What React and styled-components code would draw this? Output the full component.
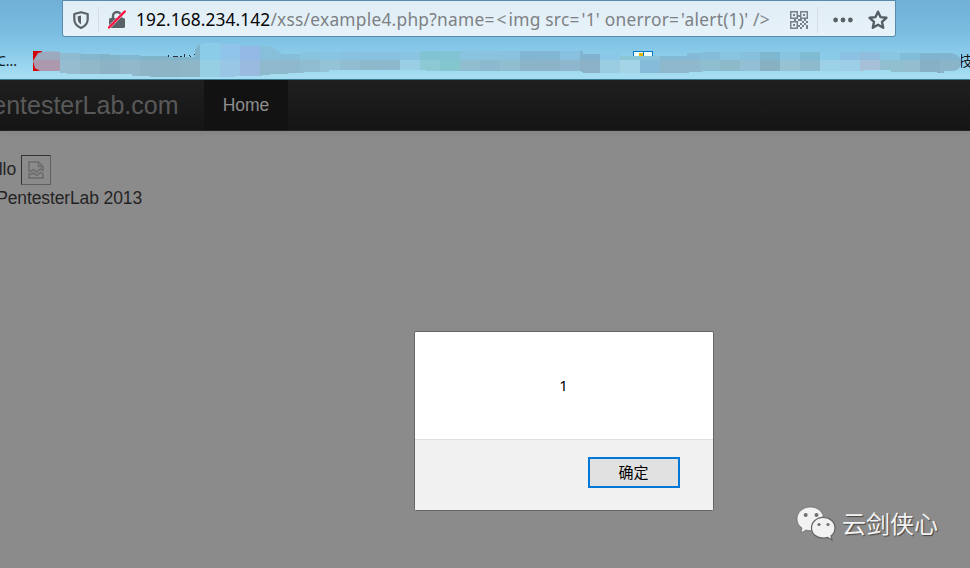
import React from 'react';
import styled, { createGlobalStyle } from 'styled-components';

const GlobalStyle = createGlobalStyle`
  * { box-sizing: border-box; }
  body { margin: 0; overflow: hidden; }
`;

const Browser = styled.div`
  position: relative;
  width: 970px;
  height: 568px;
  display: flex;
  flex-direction: column;
  overflow: hidden;
  background: #8b8b8b;
  font-family: 'Liberation Sans', Arial, sans-serif;
`;

const Chrome = styled.header`
  height: 80px;
  flex: none;
  display: flex;
  flex-direction: column;
  background: linear-gradient(#70b0d7 0, #79bce0 30px, #89cae9 52px, #a9dff3 78px);
  border-bottom: 1px solid #397a91;
`;

const AddressBar = styled.div`
  width: 834px;
  height: 37px;
  flex: none;
  margin-left: 62px;
  display: flex;
  align-items: center;
  background: linear-gradient(#e1edf6, #e7f3f9);
  border: 1px solid #538cad;
  border-radius: 0 0 3px 3px;
  padding: 2px 0 0 8px;
`;

const Divider = styled.i`
  width: 1px;
  height: 26px;
  flex: none;
  margin-left: 9px;
  background: #d5dde5;
`;

const Icon = styled.svg`
  flex: none;
  display: block;
  margin-left: ${(p) => p.$gap || 0}px;
`;

const Url = styled.div`
  width: 646px;
  margin-left: 10px;
  padding-bottom: 1px;
  white-space: pre;
  color: #7d8185;
  font: 17.33px/24px 'Noto Sans', sans-serif;
  letter-spacing: 0.25px;
`;

const Host = styled.span`
  color: #050607;
  letter-spacing: 0.1px;
`;

const MathSign = styled.span`
  letter-spacing: 2.1px;
`;

const Bookmarks = styled.div`
  height: 42px;
  display: flex;
  color: #10151a;
  font: 14px/20px 'Noto Sans', 'Noto Sans CJK SC', sans-serif;
`;

const BookmarkStart = styled.span`
  width: 33px;
  padding-top: 14px;
  display: flex;
  justify-content: flex-end;
  padding-right: 16px;
  overflow: hidden;
  white-space: nowrap;
`;

const BookmarkEnd = styled.span`
  width: 9px;
  display: flex;
  justify-content: center;
  padding-top: 14px;
  overflow: hidden;
  white-space: nowrap;
`;

const Navbar = styled.nav`
  height: 51px;
  flex: none;
  display: flex;
  background: linear-gradient(#1f1f1f, #151515);
  border-bottom: 1px solid #232323;
  box-shadow: 0 1px 6px rgba(0, 0, 0, 0.08);
`;

const Brand = styled.div`
  width: 204px;
  padding-right: 25.5px;
  display: flex;
  justify-content: flex-end;
  overflow: hidden;
  color: #595959;
  font-size: 25px;
  line-height: 51px;
`;

const NavItem = styled.div`
  width: 84px;
  background: #121212;
  color: #8e8e8e;
  font-size: 17.5px;
  line-height: 50px;
  text-align: center;
`;

const Page = styled.main`
  padding-top: 24px;
  color: #242424;
  font-size: 17.5px;
`;

const Greeting = styled.div`
  height: 30px;
  display: flex;
  align-items: flex-start;
`;

const ClippedText = styled.span`
  width: ${(p) => p.$width}px;
  display: flex;
  justify-content: flex-end;
  overflow: hidden;
  white-space: nowrap;
  line-height: ${(p) => p.$line}px;
  letter-spacing: -0.12px;
`;

const BrokenImage = styled.span`
  width: 30px;
  height: 30px;
  margin-left: 5px;
  display: grid;
  place-items: center;
  border: 1px solid;
  border-color: #333 #606060 #606060 #333;
`;

const Dialog = styled.section`
  position: absolute;
  left: 414px;
  top: 331px;
  width: 300px;
  height: 180px;
  display: flex;
  flex-direction: column;
  background: #fff;
  border: 1px solid #666;
  border-radius: 2px;
  font-family: 'Noto Sans', 'Noto Sans CJK SC', sans-serif;
`;

const Message = styled.div`
  flex: 1;
  display: grid;
  place-items: center;
  padding: 0 1px 2px 0;
  font-size: 15px;
  color: #000;
`;

const Actions = styled.footer`
  height: 71px;
  padding: 17px 33px 0 0;
  display: flex;
  justify-content: flex-end;
  align-items: flex-start;
  background: #f1f1f1;
  border-top: 1px solid #dfdfdf;
`;

const ConfirmButton = styled.button`
  width: 92px;
  height: 31px;
  padding: 0 1px 2px 0;
  border: 2px solid #0078d7;
  background: #e1e1e1;
  color: #000;
  font: 15px/25px 'Noto Sans CJK SC', sans-serif;
`;

const Watermark = styled.div`
  position: absolute;
  left: 796px;
  top: 505px;
  display: flex;
  align-items: center;
  color: #f3f3f3;
  font: 24px/36px 'Noto Sans CJK SC', sans-serif;
  text-shadow: 1px 1px 1px #444;
`;

const WatermarkName = styled.span`
  margin-left: 6px;
`;

const topCells = ['#9ca9bf', '#8ebbd0', '#84b7ce', '#82b3cb', '#82b7cf', '#80b4ca', '#81b4ca', '#80b4cc', '#8bcce9', '#90c4e8', '#93b9e6', '#87bed9', '#86bed9', '#89c4df', '#89c5e2', '#88c2e0', '#88c1df', '#87c1df', '#89c4e3', '#80c3d3', '#82c4d3', '#8ac3df', '#8bc3df', '#89c1de', '#82b5d1', '#83b6d2', '#87c1df', '#81b3cf', '#8bc7e7', '#8bc6d7', '#8bc4d8', '#83bbd7', '#84bad7', '#84bdda', '#89c4e1', '#87c0dc', '#7eb7d0', '#88c3df', '#80bbd4', '#8bcbea', '#8cc1e3', '#91bddc', '#88c6e2', '#80bdd7', '#7fb3ce', '#81b5cf', '#7fb2cb', '#82b9d3'];
const bottomCells = ['#ad99ad', '#96bdcf', '#91b8c9', '#8bb2c5', '#91b9cb', '#8db5c7', '#8db4c5', '#8eb6c7', '#96cee4', '#9ac6e6', '#9abae0', '#8fbacd', '#8eb9cc', '#90bccf', '#94c2d7', '#90bdd2', '#8db7cb', '#8eb8ce', '#99cee4', '#8dc9d5', '#84c6cd', '#90bdd0', '#8cb9ce', '#91bdd0', '#8cb4c8', '#8cb3c8', '#8eb7ce', '#8bb1c7', '#9acce2', '#a4d5e7', '#86bcd9', '#8eb8cc', '#90b8cc', '#8fbed0', '#8cbacb', '#92bfd4', '#87b1c3', '#96c2d3', '#8dbbcd', '#9dd1e8', '#9ccfe7', '#a5c0d7', '#91bfd0', '#92bed0', '#87b0c4', '#8ab4c7', '#87adc1', '#8db4c8'];

function SmudgedBookmarks() {
  return (
    <Icon width="928" height="42" viewBox="33 37 928 42" shapeRendering="crispEdges" aria-hidden="true">
      <defs>
        <clipPath id="stroke">
          <path d="M38 53Q46 50 60 52V53H81V54H110V55H140V56H168V57H195V50Q197 44 205 43H220V44H240V46H268Q276 48 282 54H302V52H421V51H583V54H620V56H687V53H703V52H897V53H950Q960 54 962 62Q960 72 950 71H944V73H937V72H891V70H865V71H703V72H689V73H583V72H581V71H426V70H329V72H304V73H288V74H270V75H262V76H235V77H150V76H132V74H67V73H60V71H40L35 68L33 61Z" />
        </clipPath>
      </defs>
      <path d="M33 51h9v20h-9Z" fill="#d40008" />
      <path d="M109 56h4m32 0h7m1 0h6m9-1v3m5-2h5m2 0h2m2-2v4m5-3 2 2m3-3 3 2" fill="none" stroke="#26343b" />
      <path d="M433 51.5h5" stroke="#33a267" />
      <path d="M633.5 51.5h19v5h-19Z" fill="#efffff" stroke="#0877c0" />
      <path d="M639 53h5v3h-5Z" fill="#e4ba00" />
      <path d="M643.5 51v5" stroke="#0877c0" />
      <g clipPath="url(#stroke)">
        {topCells.map((fill, i) => <rect key={i} x={i ? 40 + i * 20 : 33} y="40" width={i ? 20 : 27} height="20" fill={fill} />)}
        {bottomCells.map((fill, i) => <rect key={i} x={i ? 40 + i * 20 : 33} y="60" width={i ? 20 : 27} height="20" fill={fill} />)}
      </g>
    </Icon>
  );
}

function QrIcon() {
  return (
    <Icon $gap={8} width="18" height="18" viewBox="0 0 18 18" fill="#77818a">
      <path fillRule="evenodd" d="M0 0h8v8H0ZM1.5 1.5v5h5v-5ZM10 0h8v8h-8ZM11.5 1.5v5h5v-5ZM0 10h8v8H0ZM1.5 11.5v5h5v-5Z" />
      <path d="M3 3h2v2H3Zm10 0h2v2h-2ZM3 13h2v2H3ZM8 4h2v2H8ZM8 8h2v2H8ZM4 8h2v2H4ZM10 8h2v2h-2ZM14 8h2v2h-2ZM12 10h2v2h-2ZM16 10h2v2h-2ZM10 12h2v2h-2ZM14 12h2v2h-2ZM12 14h2v2h-2ZM16 14h2v4h-2ZM8 14h2v2H8ZM10 16h2v2h-2Z" />
    </Icon>
  );
}

export default function App() {
  return (
    <>
      <GlobalStyle />
      <Browser>
        <Chrome>
          <AddressBar>
            <Icon $gap={2} width="16" height="18" viewBox="0 0 16 18">
              <path d="M8 1.2 14.7 3v5.2c0 3.8-2.2 6.8-6.7 8.7-4.5-1.9-6.7-4.9-6.7-8.7V3Z" fill="none" stroke="#5a6267" strokeWidth="2.2" strokeLinejoin="round" />
              <path d="M8 4.5v9C5.6 12 4.8 10.2 4.8 8V5.2Z" fill="#5a6267" />
            </Icon>
            <Divider />
            <Icon $gap={9} width="18" height="19" viewBox="0 0 18 19">
              <path d="M5 8V6a4 4 0 0 1 8 0v2" fill="none" stroke="#5a6267" strokeWidth="2.4" />
              <rect x="1" y="8" width="16" height="10" rx="1.6" fill="#5a6267" />
              <path d="M1 17.5 16.8 1.5" stroke="#e7f1f8" strokeWidth="3.2" />
              <path d="M1 17.5 16.8 1.5" stroke="#ff0d3e" strokeWidth="2.4" strokeLinecap="round" />
            </Icon>
            <Url>
              <Host>192.168.234.142</Host>/xss/example4.php?name<MathSign>=&lt;</MathSign>img src<MathSign>=</MathSign>'1' onerror<MathSign>=</MathSign>'alert(1)' /&gt;
            </Url>
            <QrIcon />
            <Divider />
            <Icon $gap={15} width="20" height="6" viewBox="0 0 20 6" fill="#596167">
              <circle cx="2.6" cy="3" r="2.4" /><circle cx="10" cy="3" r="2.4" /><circle cx="17.4" cy="3" r="2.4" />
            </Icon>
            <Icon $gap={15} width="20" height="20" viewBox="0 0 20 20">
              <path d="m10 1.7 2.5 5.4 5.9.7-4.4 4 1.2 6-5.2-3-5.2 3 1.2-6-4.4-4 5.9-.7Z" fill="none" stroke="#555e64" strokeWidth="2.4" strokeLinejoin="round" />
            </Icon>
          </AddressBar>
          <Bookmarks>
            <BookmarkStart>C...</BookmarkStart>
            <SmudgedBookmarks />
            <BookmarkEnd>技</BookmarkEnd>
          </Bookmarks>
        </Chrome>
        <Navbar><Brand>PentesterLab.com</Brand><NavItem>Home</NavItem></Navbar>
        <Page>
          <Greeting>
            <ClippedText $width={16} $line={28}>Hello</ClippedText>
            <BrokenImage>
              <Icon width="16" height="18" viewBox="0 0 16 18" fill="none" stroke="#6c6c6c" strokeWidth="1.5">
                <path d="M1 9.5V1h9.5L15 5.5v4L12.5 8 8.5 11 5.5 8.5 3 10.500Z" />
                <path d="M10.5 1v4.500H15M1 17v-4.500L3 13.500 5.500 12l3 2.500 4-3L15 13v4Z" />
              </Icon>
            </BrokenImage>
          </Greeting>
          <ClippedText $width={142} $line={27}>© PentesterLab 2013</ClippedText>
        </Page>
        <Dialog>
          <Message>1</Message>
          <Actions><ConfirmButton>确定</ConfirmButton></Actions>
        </Dialog>
        <Watermark>
          <Icon width="40" height="36" viewBox="0 0 40 36">
            <path d="M14.5 2C7 2 1 7 1 14c0 4 2 7 5 9l-1 5 5-3q3 1 6 .5Q15 14 27.5 11.5C26 6 21 2 14.5 2Z" fill="#f2f2f2" stroke="#666" strokeWidth=".7" />
            <path d="M27.5 12.5c-7 0-12 4.500-12 10.500s5 10 12 10q2 0 4-.6l4.500 2.500-1-4q4-3.200 4-8c0-6-5-10.400-11.500-10.400Z" fill="#f2f2f2" stroke="#626262" strokeWidth="1.2" />
            <g fill="#707070"><circle cx="9.7" cy="10" r="2" /><circle cx="20.5" cy="10" r="2" /><circle cx="23" cy="19.5" r="1.6" /><circle cx="32" cy="19.5" r="1.6" /></g>
          </Icon>
          <WatermarkName>云剑侠心</WatermarkName>
        </Watermark>
      </Browser>
    </>
  );
}
